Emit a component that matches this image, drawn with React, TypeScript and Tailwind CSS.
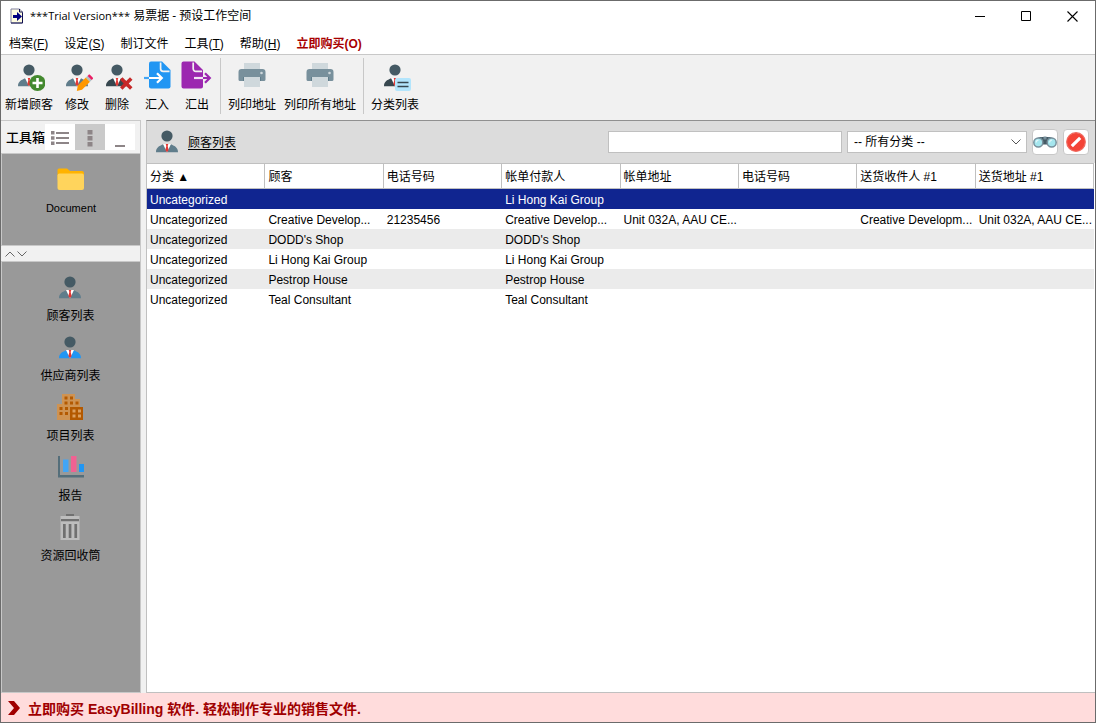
import React from "react";

const uiFont = "font-['Liberation_Sans','Noto_Sans_CJK_SC',sans-serif]";
const titleFont = "font-['Open_Sans','Noto_Sans_CJK_SC',sans-serif]";

type PersonProps = { body?: string; children?: React.ReactNode };

function Person({ body = "#607d8b", children }: PersonProps) {
  return (
    <svg width="32" height="32" viewBox="0 0 32 32" aria-hidden="true" className="shrink-0">
      <circle cx="16" cy="10" r="5.6" fill="#455a64" />
      <path d="M5 26.200c0-4.600 3-6 7-7.900h8c4 1.900 7 3.300 7 7.900z" fill={body} />
      <path d="M12 18l4 8.200 4-8.200z" fill="#fff" />
      <path d="M14.700 18h2.600l-.6 2 .9 4-1.600 2.200-1.600-2.200.9-4z" fill="#e53935" />
      {children}
    </svg>
  );
}

function AddCustomerIcon() {
  return (
    <Person>
      <circle cx="24.500" cy="23" r="8" fill="#43892f" />
      <path d="M23.200 18h2.600v3.700h3.700v2.600h-3.700V28h-2.600v-3.700h-3.700v-2.600h3.700z" fill="#fff" />
    </Person>
  );
}

function EditCustomerIcon() {
  return (
    <Person>
      <path d="M16.800 25.600l8-8 4.200 4.200-8 8-5.200 1.200z" fill="#ff9800" />
      <path d="M24.800 17.600l1.700-1.700 4.200 4.200-1.700 1.700z" fill="#b0bec5" />
      <path d="M26.500 15.900l1-1c.5-.5 1.200-.5 1.700 0l2.500 2.500c.4.500.4 1.200 0 1.700l-1 1z" fill="#e91e63" />
    </Person>
  );
}

function DeleteCustomerIcon() {
  return (
    <Person body="#37474f">
      <path d="M21.500 17.300l3.700 3.800 3.800-3.800 2.500 2.500-3.800 3.800 3.800 3.700-2.500 2.500-3.800-3.700-3.700 3.700-2.500-2.500 3.700-3.700-3.700-3.800z" fill="#c62828" />
    </Person>
  );
}

function CategoryIcon() {
  return (
    <Person body="#37474f">
      <rect x="16" y="18" width="16" height="13" rx="2" fill="#b3e5fc" />
      <path d="M18.500 22.500h11M18.500 26.500h11" stroke="#37474f" strokeWidth="1.300" />
    </Person>
  );
}

function ImportIcon() {
  return (
    <svg width="32" height="32" viewBox="0 0 32 32" aria-hidden="true">
      <path d="M10 1.500h11l8.500 8.500v16.500a2 2 0 0 1-2 2H10a2 2 0 0 1-2-2v-23a2 2 0 0 1 2-2z" fill="#2196f3" />
      <path d="M19.600 2.500v6.200a2.600 2.600 0 0 0 2.600 2.600h6.300" fill="none" stroke="#f1f1f1" strokeWidth="1.700" />
      <path d="M8 18h13M16 13.200l4.800 4.800-4.800 4.800" fill="none" stroke="#fff" strokeWidth="2.200" />
      <path d="M3 18h5" stroke="#42a5f5" strokeWidth="2.200" />
    </svg>
  );
}

function ExportIcon() {
  return (
    <svg width="32" height="32" viewBox="0 0 32 32" aria-hidden="true">
      <path d="M2.500 1.500H13.500l8.500 8.500v16.500a2 2 0 0 1-2 2H2.500a2 2 0 0 1-2-2v-23a2 2 0 0 1 2-2z" fill="#9c27b0" />
      <path d="M12.200 2.500v6.200a2.600 2.600 0 0 0 2.600 2.600h6.300" fill="none" stroke="#f1f1f1" strokeWidth="1.700" />
      <path d="M13 18h9" stroke="#f3e5f5" strokeWidth="2.200" />
      <path d="M22 18h7M24 13.200l4.800 4.800-4.800 4.800" fill="none" stroke="#9c27b0" strokeWidth="2.200" />
    </svg>
  );
}

function PrintIcon() {
  return (
    <svg width="32" height="32" viewBox="0 0 32 32" aria-hidden="true">
      <path d="M8 3h16v7H8z" fill="#cfd8dc" />
      <path d="M5.500 9h21a3 3 0 0 1 3 3v7.500a1.500 1.500 0 0 1-1.500 1.500H4a1.500 1.500 0 0 1-1.500-1.500V12a3 3 0 0 1 3-3z" fill="#78909c" />
      <circle cx="25.500" cy="13" r="1.300" fill="#cfd8dc" />
      <path d="M7 17h18v4H7z" fill="#607d8b" />
      <path d="M8 17h16v10H8z" fill="#cfd8dc" />
    </svg>
  );
}

function FolderIcon() {
  return (
    <svg width="32" height="32" viewBox="0 0 32 32" aria-hidden="true">
      <path d="M4 4.500h8l3 2.500h12a2 2 0 0 1 2 2v7H2.500V6a1.500 1.500 0 0 1 1.500-1.500z" fill="#ffb300" />
      <rect x="2.500" y="9.500" width="26.500" height="16.500" rx="2" fill="#ffd45c" />
    </svg>
  );
}

function ProjectIcon() {
  return (
    <svg width="32" height="32" viewBox="0 0 32 32" aria-hidden="true">
      <path d="M8 2h13v5h5v9h-8v12H3V12h5z" fill="#cf9352" />
      <path d="M10.500 4.500h3v3h-3zM16 4.500h3v3h-3zM10.500 9.500h3v3h-3zM16 9.500h3v3h-3zM21.500 9.500h3v3h-3zM5.500 15h3v3h-3zM11 15h3v3h-3zM5.500 20h3v3h-3zM11 20h3v3h-3z" fill="#b35900" />
      <path d="M16 15h13v13H16z" fill="#b35900" />
      <path d="M18.500 17.500h3v3h-3zM24 17.500h3v3h-3zM18.500 22.500h3v3h-3zM24 22.500h3v3h-3z" fill="#dca05f" />
    </svg>
  );
}

function ReportIcon() {
  return (
    <svg width="32" height="32" viewBox="0 0 32 32" aria-hidden="true">
      <path d="M3 4h2v19h24v2.500H3z" fill="#546e7a" />
      <path d="M8 7.500h5.500V20H8z" fill="#42a5f5" />
      <path d="M16 4h5.500v16H16z" fill="#f06292" />
      <path d="M24 12h5v8h-5z" fill="#2196f3" />
    </svg>
  );
}

function TrashIcon() {
  return (
    <svg width="32" height="32" viewBox="0 0 32 32" aria-hidden="true">
      <path d="M12 2h8v2.500h-8z" fill="#707070" />
      <path d="M6.500 4h19v24h-19z" fill="#bdbdbd" />
      <path d="M7 7h18v2.200H7zM9 12h2.700v14H9zM14.700 12h2.700v14h-2.700zM20.400 12h2.700v14h-2.700z" fill="#707070" />
    </svg>
  );
}

function BinocularsIcon() {
  return (
    <svg width="24" height="24" viewBox="0 0 24 24" aria-hidden="true">
      <path d="M3 8.500l4-1.500h10l4 1.500-3 5H6z" fill="#546e7a" />
      <path d="M9 7h6v7.500H9z" fill="#455a64" />
      <path d="M10.500 6.500h3v3h-3z" fill="#78909c" />
      <circle cx="5.300" cy="12.500" r="4.500" fill="#a5e6ee" stroke="#78909c" strokeWidth="1.500" />
      <circle cx="18.700" cy="12.500" r="4.500" fill="#a5e6ee" stroke="#78909c" strokeWidth="1.500" />
      <path d="M3.200 12.500a2.300 2.300 0 0 1 2.300-2.300M16.600 12.500a2.300 2.300 0 0 1 2.300-2.300" stroke="#e0f7fa" strokeWidth="1.300" fill="none" />
    </svg>
  );
}

function ClearIcon() {
  return (
    <svg width="24" height="24" viewBox="0 0 24 24" aria-hidden="true">
      <circle cx="12" cy="12" r="9.300" fill="#f44336" stroke="#ef6a60" strokeWidth="1.200" />
      <path d="M7.800 16.200l8.400-8.400" stroke="#fff" strokeWidth="3.200" />
    </svg>
  );
}

function AppIcon() {
  return (
    <svg width="14" height="16" viewBox="0 0 14 16" aria-hidden="true">
      <path d="M1 1h8.500l3 3v11H1z" fill="#fffde0" stroke="#8080a0" />
      <path d="M9.500 1v3h3M12.500 4.500V15H1" fill="none" stroke="#101050" strokeWidth="1" />
      <path d="M3 7h4V4l5 4.500-5 4.500v-3H3z" fill="#000080" />
    </svg>
  );
}

const menus = [
  { label: "档案", key: "F" },
  { label: "设定", key: "S" },
  { label: "制订文件" },
  { label: "工具", key: "T" },
  { label: "帮助", key: "H" },
];

function ToolButton({ icon, label, tight = false }: { icon: React.ReactNode; label: string; tight?: boolean }) {
  return (
    <button type="button" className={tight ? "flex flex-col items-center gap-[5px] px-1" : "flex w-10 flex-col items-center gap-[5px]"}>
      {icon}
      <span className="whitespace-nowrap leading-4">{label}</span>
    </button>
  );
}

const sideItems = [
  { label: "顾客列表", icon: <Person /> },
  { label: "供应商列表", icon: <Person body="#2196f3" /> },
  { label: "项目列表", icon: <ProjectIcon /> },
  { label: "报告", icon: <ReportIcon /> },
  { label: "资源回收筒", icon: <TrashIcon /> },
];

function SideButton({ icon, label }: { icon: React.ReactNode; label: string }) {
  return (
    <button type="button" className="flex flex-col items-center gap-[5px] leading-[14px]">
      {icon}
      <span>{label}</span>
    </button>
  );
}

const columns = ["分类 ▲", "顾客", "电话号码", "帐单付款人", "帐单地址", "电话号码", "送货收件人 #1", "送货地址 #1"];

const rows = [
  ["Uncategorized", "", "", "Li Hong Kai Group", "", "", "", ""],
  ["Uncategorized", "Creative Develop...", "21235456", "Creative Develop...", "Unit 032A, AAU CE...", "", "Creative Developm...", "Unit 032A, AAU CE..."],
  ["Uncategorized", "DODD's Shop", "", "DODD's Shop", "", "", "", ""],
  ["Uncategorized", "Li Hong Kai Group", "", "Li Hong Kai Group", "", "", "", ""],
  ["Uncategorized", "Pestrop House", "", "Pestrop House", "", "", "", ""],
  ["Uncategorized", "Teal Consultant", "", "Teal Consultant", "", "", "", ""],
];

function rowColor(index: number) {
  if (index === 0) return "h-5 bg-[#102590] text-white";
  return index % 2 === 0 ? "h-5 bg-[#ebebeb]" : "h-5 bg-white";
}

function TitleBar() {
  return (
    <header className={`flex h-[30px] items-center bg-white pl-[9px] text-xs ${titleFont}`}>
      <AppIcon />
      <h1 className="ml-1.5 flex-1 text-xs">
        <span className="text-[11px]">***Trial Version***</span> 易票据 - 预设工作空间
      </h1>
      <button type="button" aria-label="最小化" className="flex w-[46px] justify-center">
        <svg width="11" height="11" viewBox="0 0 11 11"><path d="M0 5.500h10" stroke="#000" /></svg>
      </button>
      <button type="button" aria-label="最大化" className="flex w-[46px] justify-center">
        <svg width="11" height="11" viewBox="0 0 11 11"><path d="M.5.5h9v9h-9z" fill="none" stroke="#000" /></svg>
      </button>
      <button type="button" aria-label="关闭" className="flex w-[46px] justify-center">
        <svg width="11" height="11" viewBox="0 0 11 11"><path d="M.5.5l10 10M10.500.5l-10 10" stroke="#000" strokeWidth="1.100" /></svg>
      </button>
    </header>
  );
}

function Sidebar() {
  return (
    <aside className="flex w-[140px] shrink-0 flex-col border-r border-t border-[#c8c8c8]">
      <div className="flex h-8 items-center pl-[5px]">
        <h2 className="w-[39px] pt-0.5 text-[13px] font-medium">工具箱</h2>
        <button type="button" aria-label="列表" className="flex h-[26px] w-[30px] items-center justify-center bg-white pt-0.5">
          <svg width="18" height="16" viewBox="0 0 18 16">
            <path d="M0 1h3.500v3.500H0zM0 6.300h3.500v3.500H0zM0 11.500h3.500V15H0z" fill="#8d8587" />
            <path d="M5 3h13M5 8h13M5 13h13" stroke="#8d8587" strokeWidth="2" />
          </svg>
        </button>
        <button type="button" aria-label="图标" className="flex h-[26px] w-[30px] items-center justify-center bg-[#cacaca] pt-0.5">
          <svg width="6" height="18" viewBox="0 0 6 18">
            <path d="M.5 1h5v4.500h-5zM.5 7h5v4.500h-5zM.5 13h5v4.500h-5z" fill="#8d8587" />
          </svg>
        </button>
        <button type="button" aria-label="收起" className="flex h-[26px] w-[30px] items-end justify-center bg-white pb-[3px]">
          <svg width="10" height="2" viewBox="0 0 10 2"><path d="M0 1h10" stroke="#8d8587" strokeWidth="2" /></svg>
        </button>
      </div>
      <div className="flex h-[93px] flex-col items-center border border-r-0 border-[#c8c8c8] bg-[#999] pt-2.5 text-[11px]">
        <SideButton icon={<FolderIcon />} label="Document" />
      </div>
      <div className="flex h-[15px] items-center gap-0.5 pl-1">
        <button type="button" aria-label="上移">
          <svg width="10" height="6" viewBox="0 0 10 6" className="block"><path d="M.5 5.500L5 1l4.500 4.500" fill="none" stroke="#666" /></svg>
        </button>
        <button type="button" aria-label="下移">
          <svg width="10" height="6" viewBox="0 0 10 6" className="block"><path d="M.5.5L5 5 9.500.5" fill="none" stroke="#666" /></svg>
        </button>
      </div>
      <nav className="flex flex-1 flex-col items-center gap-[9px] border border-r-0 border-[#c8c8c8] bg-[#999] pr-px pt-2.5">
        {sideItems.map((item) => (
          <SideButton key={item.label} icon={item.icon} label={item.label} />
        ))}
      </nav>
    </aside>
  );
}

function CustomerList() {
  return (
    <main className="flex min-w-0 flex-1 flex-col border-b border-l border-t border-b-[#c0c0c0] border-l-[#c0c0c0] border-t-[#909090] bg-white">
      <div className="flex h-[42px] items-center gap-[5px] bg-[#dcdcdc] pl-1 pr-1.5">
        <Person />
        <h2 className="flex-1 pt-0.5 text-xs underline underline-offset-2">顾客列表</h2>
        <input type="text" aria-label="搜索" className="h-[22px] w-[234px] border border-[#c0c0c0] bg-white px-1 outline-none" />
        <div className="grid w-[180px] items-center">
          <select aria-label="分类" className="col-start-1 row-start-1 h-[22px] appearance-none border border-[#c0c0c0] bg-white pl-1.5 text-xs outline-none">
            <option>-- 所有分类 --</option>
          </select>
          <svg width="10" height="6" viewBox="0 0 10 6" className="pointer-events-none col-start-1 row-start-1 mr-1.5 justify-self-end">
            <path d="M.5.5L5 5 9.500.5" fill="none" stroke="#555" />
          </svg>
        </div>
        <button type="button" aria-label="查找" className="flex size-[26px] items-center justify-center rounded-sm border border-[#c8c8c8] bg-white">
          <BinocularsIcon />
        </button>
        <button type="button" aria-label="清除" className="flex size-[26px] items-center justify-center rounded-sm border border-[#c8c8c8] bg-white">
          <ClearIcon />
        </button>
      </div>
      <div className="pr-px">
        <table className="w-full table-fixed border-separate border-spacing-0">
          <thead>
            <tr className="h-[26px]">
              {columns.map((name, index) => (
                <th key={index} scope="col" className="whitespace-nowrap border-b border-r border-t border-[#c0c0c0] bg-white px-[3px] pb-0 pt-0.5 text-left text-xs font-normal">
                  {name}
                </th>
              ))}
            </tr>
          </thead>
          <tbody className="text-xs leading-[18px]">
            {rows.map((row, index) => (
              <tr key={index} className={rowColor(index)}>
                {row.map((cell, cellIndex) => (
                  <td key={cellIndex} className="whitespace-nowrap pb-0 pl-[3px] pr-0 pt-0.5">{cell}</td>
                ))}
              </tr>
            ))}
          </tbody>
        </table>
      </div>
    </main>
  );
}

export default function App() {
  return (
    <div className={`flex min-h-screen flex-col border border-[#6b6b6b] bg-[#f1f1f1] text-xs text-black ${uiFont}`}>
      <TitleBar />
      <nav className="flex h-6 items-center border-b border-[#c8c8c8] bg-white pt-0.5">
        {menus.map((menu) => (
          <button key={menu.label} type="button" className="px-2">
            {menu.label}
            {menu.key && <>(<u className="underline-offset-1">{menu.key}</u>)</>}
          </button>
        ))}
        <button type="button" className="px-2 font-bold text-[#a80000]">立即购买(O)</button>
      </nav>
      <div className="flex h-[65px] items-start pt-[5px]">
        <ToolButton icon={<AddCustomerIcon />} label="新增顾客" tight />
        <ToolButton icon={<EditCustomerIcon />} label="修改" />
        <ToolButton icon={<DeleteCustomerIcon />} label="删除" />
        <ToolButton icon={<ImportIcon />} label="汇入" />
        <ToolButton icon={<ExportIcon />} label="汇出" />
        <div className="mx-[3px] -mt-0.5 h-14 w-px bg-[#c8c8c8]" />
        <ToolButton icon={<PrintIcon />} label="列印地址" tight />
        <ToolButton icon={<PrintIcon />} label="列印所有地址" tight />
        <div className="mx-[3px] -mt-0.5 h-14 w-px bg-[#c8c8c8]" />
        <ToolButton icon={<CategoryIcon />} label="分类列表" tight />
      </div>
      <div className="flex flex-1 gap-[5px]">
        <Sidebar />
        <CustomerList />
      </div>
      <footer className="flex h-[29px] items-center bg-[#ffdcdc] pl-[7px] text-[#a00000]">
        <svg width="13" height="14" viewBox="0 0 13 14" aria-hidden="true">
          <path d="M0 0h6l6 7-6 7H0l6-7z" fill="#a00000" />
        </svg>
        <a href="#buy" className="ml-[7px] pt-0.5 text-sm font-bold">立即购买 EasyBilling 软件. 轻松制作专业的销售文件.</a>
      </footer>
    </div>
  );
}
